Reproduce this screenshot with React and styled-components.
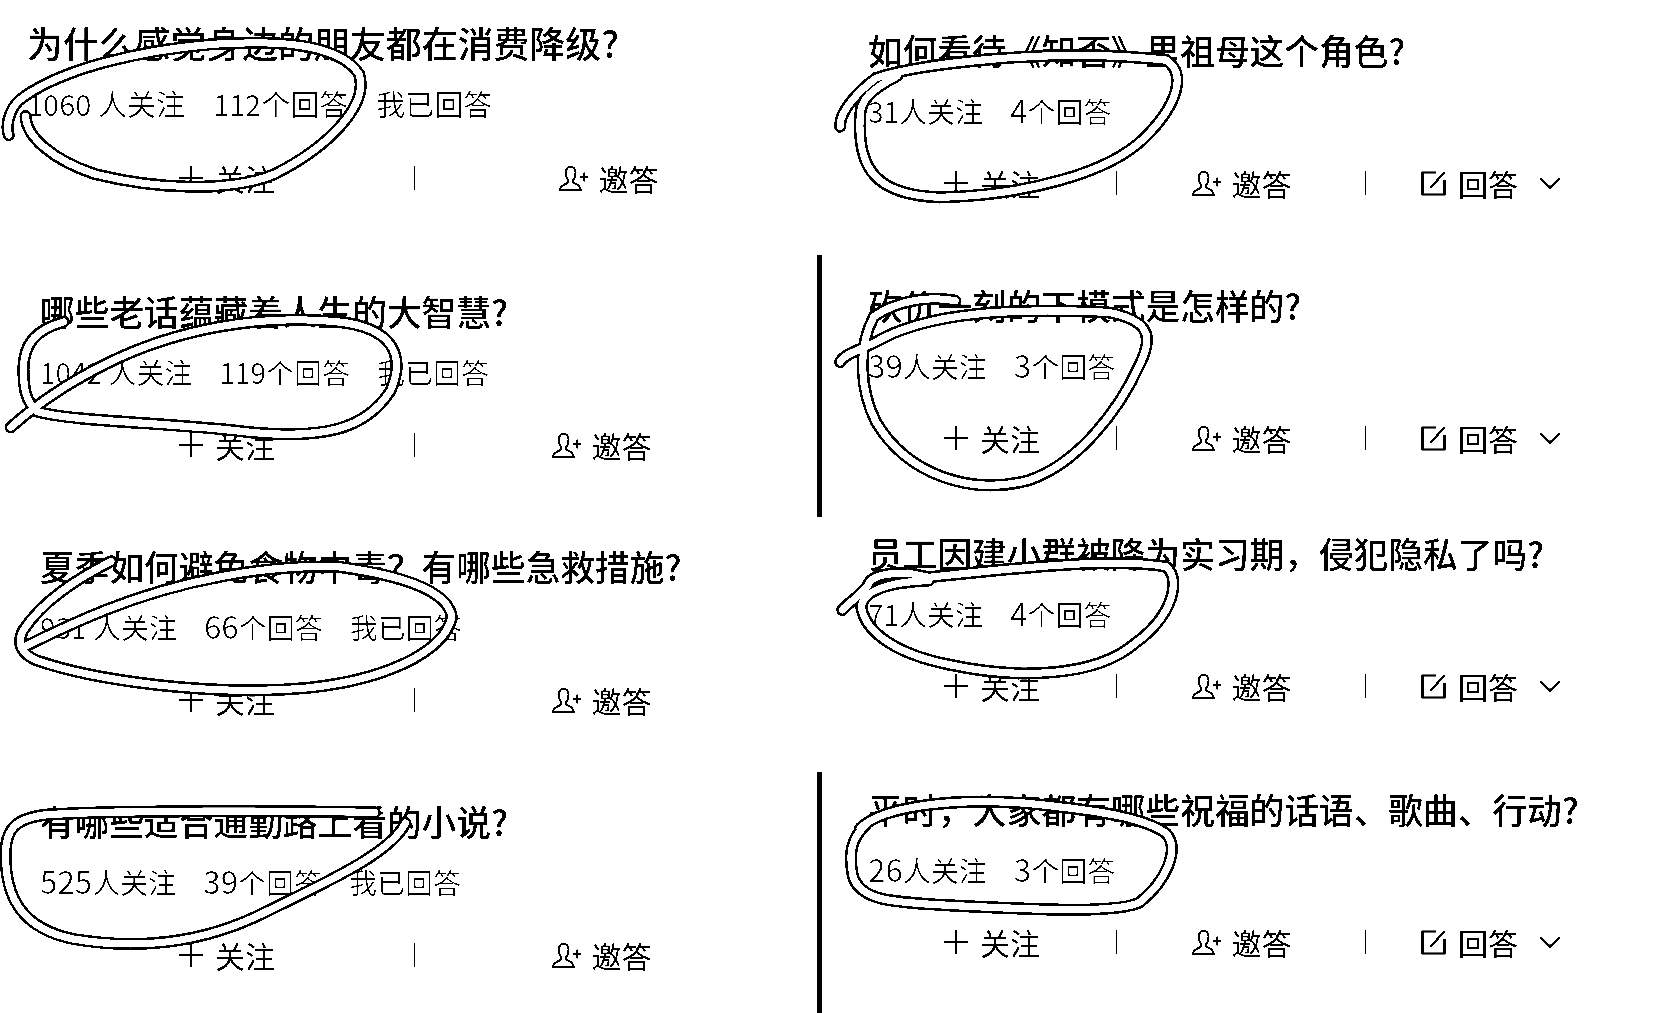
import React from "react";
import styled, { createGlobalStyle } from "styled-components";

const Global = createGlobalStyle`
  html, body { margin: 0; padding: 0; background: #fff; }
  #root { width: 1655px; height: 1013px; overflow: hidden; }
`;

const Page = styled.div`
  position: relative;
  display: grid;
  grid-template-columns: 817px 838px;
  width: 1655px;
  height: 1013px;
  overflow: hidden;
  background: #fff;
  color: #000;
  font-family: "Noto Sans CJK SC", "Noto Sans", sans-serif;
  filter: grayscale(1) contrast(40);
`;

const Column = styled.div`
  display: flex;
  flex-direction: column;
  min-width: 0;
`;

const Item = styled.section`
  box-sizing: border-box;
  height: ${(p) => p.$height}px;
  padding: ${(p) => p.$top}px 0 0 ${(p) => p.$left}px;
  border-left: ${(p) => (p.$bar ? "5px solid #000" : "0 none")};
`;

const Head = styled.div`
  margin-left: ${(p) => p.$shift || 0}px;
`;

const Title = styled.h2`
  margin: 0;
  font-size: ${(p) => p.$size}px;
  line-height: 44px;
  font-weight: 500;
  white-space: nowrap;
`;

const Meta = styled.div`
  display: flex;
  gap: ${(p) => p.$gap}px;
  margin-top: 19px;
  font-size: ${(p) => p.$size}px;
  line-height: 40px;
  font-weight: 400;
  color: #6a6a6a;
  white-space: pre;
`;

const Num = styled.span`
  font-size: ${(p) => (p.$wide ? "1.12em" : "1em")};
  line-height: 1;
`;

const Actions = styled.div`
  display: flex;
  align-items: center;
  height: 40px;
  margin-top: ${(p) => p.$gap}px;
`;

const Cell = styled.div`
  display: flex;
  align-items: center;
  justify-content: center;
  flex: none;
  width: ${(p) => p.$w}px;
  font-size: 30px;
  line-height: 40px;
  font-weight: 400;
  white-space: nowrap;
`;

const Sep = styled.i`
  flex: none;
  display: block;
  width: 1px;
  height: 24px;
  background: #000;
`;

const Glyph = styled.svg`
  display: block;
  flex: none;
  margin-right: ${(p) => p.$after}px;
  margin-left: ${(p) => p.$before || 0}px;
  fill: none;
  stroke: #000;
  stroke-width: ${(p) => p.$sw || 2};
`;

const Ink = styled.svg`
  position: absolute;
  left: 0;
  top: 0;
  width: 1655px;
  height: 1013px;
  pointer-events: none;
  fill: none;
  stroke-linecap: round;
  stroke-linejoin: round;
`;

const Plus = () => (
  <Glyph $after={12} $sw={2.6} width="24" height="24" viewBox="0 0 24 24">
    <path d="M0 12H24M12 0V24" />
  </Glyph>
);
const Invite = () => (
  <Glyph $after={10} $sw={1.9} width="31" height="27" viewBox="0 0 30 26">
    <path d="M13 1.500c-3.500 0-5.500 2.500-5.500 6 0 3 1 5.500 2.500 7 .5 1.500-.5 2.500-2 3.500-2.500 1-5.500 2-6.500 6h20.500c-.6-4-3.500-5-5.500-6-1.500-1-2.500-2-2-3.500 1.500-1.500 2.500-4 2.500-7 0-3.500-2-6-5-6z" />
    <path d="M21 11.500H29.500M25.200 7.200V15.800" />
  </Glyph>
);
const Edit = () => (
  <Glyph $after={12} $sw={2.2} width="25" height="25" viewBox="0 0 25 25">
    <path d="M15 1.500H1.500V23.500H23.500V9" />
    <path d="M24 1L9 17" />
  </Glyph>
);
const Chevron = () => (
  <Glyph $before={21} $after={0} $sw={2.4} width="22" height="12" viewBox="0 0 22 12">
    <path d="M1 1L11 10.500L21 1" />
  </Glyph>
);

/* count and label are kept apart: the reference sets digits without a "1" larger */
const Count = ({ text }) => {
  const [, digits, rest] = text.match(/^(\d+)(.*)$/);
  return (
    <span>
      <Num $wide={!digits.includes("1")}>{digits}</Num>
      {rest}
    </span>
  );
};

const LEFT = [
  { title: "为什么感觉身边的朋友都在消费降级?", size: 35.9, follow: "1060 人关注", answers: "112个回答", metaSize: 29, gap: 28, height: 269, shift: -13, act: 35, inviteW: 386 },
  { title: "哪些老话蕴藏着人生的大智慧?", size: 34.7, follow: "1042 人关注", answers: "119个回答", metaSize: 28, gap: 27, height: 255, act: 33, inviteW: 372 },
  { title: "夏季如何避免食物中毒\uFF1F有哪些急救措施?", size: 34.7, follow: "931 人关注", answers: "66个回答", metaSize: 28, gap: 27, height: 255, act: 33, inviteW: 372 },
  { title: "有哪些适合通勤路上看的小说?", size: 34.7, follow: "525人关注", answers: "39个回答", metaSize: 28, gap: 27, height: 234, act: 33, inviteW: 372 },
];

const RIGHT = [
  { title: "如何看待《知否》里祖母这个角色?", follow: "31人关注", answers: "4个回答", height: 255, top: 28 },
  { title: "砍价一刻的下模式是怎样的?", follow: "39人关注", answers: "3个回答", height: 262, top: 28, bar: true },
  { title: "员工因建小群被降为实习期\uFF0C侵犯隐私了吗?", follow: "71人关注", answers: "4个回答", height: 255, top: 14 },
  { title: "平时\uFF0C大家都有哪些祝福的话语、歌曲、行动?", follow: "26人关注", answers: "3个回答", height: 241, top: 15, bar: true },
];

const LOOPS = [
  "M8 128 C4 115 12 98 22 92 C60 65 130 48 200 42 C260 38 320 40 340 70 C350 100 310 140 260 165 C220 182 150 180 90 165 C50 152 25 130 24 110",
  "M60 305 C35 312 22 325 22 350 C22 368 24 380 35 390 C70 400 160 400 240 410 C300 415 345 410 370 370 C385 335 370 310 320 305 C250 298 170 310 100 345 C70 360 40 378 10 405",
  "M105 532 C70 550 40 570 22 597 C15 610 20 620 35 626 C90 645 200 660 290 652 C360 645 420 620 428 585 C425 560 380 545 320 537 C250 535 170 550 100 578 C70 590 45 602 25 612",
  "M355 770 C260 768 120 768 45 772 C15 775 5 785 5 810 C5 850 20 880 70 890 C130 900 190 895 250 865 C300 840 370 810 384 780",
  "M796 120 C795 105 815 85 830 74 C870 60 1000 45 1105 57 C1125 70 1115 100 1085 130 C1050 165 970 185 890 187 C830 185 812 160 815 110 C815 95 825 85 850 72",
  "M796 343 C800 335 815 332 830 324 C880 295 960 292 1050 296 C1085 303 1095 315 1080 345 C1060 390 1020 440 975 455 C920 470 860 450 830 400 C815 370 812 330 828 300 C850 285 880 280 905 285",
  "M798 578 C805 570 815 565 822 555 C825 545 840 543 860 543 L880 547 C950 540 1050 528 1105 537 C1120 550 1110 585 1075 610 C1040 640 970 645 900 630 C850 620 820 600 816 575 C818 560 840 552 880 550",
  "M815 785 C835 765 900 755 980 762 C1040 768 1085 775 1105 790 C1118 805 1105 835 1080 855 C1060 866 980 862 900 858 C850 855 815 855 808 830 C804 810 806 795 820 782",
];

export default function App() {
  return (
    <Page>
      <Global />
      <Column>
        {LEFT.map((q) => (
          <Item key={q.title} $height={q.height} $top={20} $left={40}>
            <Head $shift={q.shift}>
              <Title $size={q.size}>{q.title}</Title>
              <Meta $size={q.metaSize} $gap={q.gap}>
                <Count text={q.follow} />
                <Count text={q.answers} />
                <span>我已回答</span>
              </Meta>
            </Head>
            <Actions $gap={q.act}>
              <Cell $w={374}><Plus />关注</Cell>
              <Sep />
              <Cell $w={q.inviteW}><Invite />邀答</Cell>
            </Actions>
          </Item>
        ))}
      </Column>
      <Column>
        {RIGHT.map((q) => (
          <Item key={q.title} $height={q.height} $top={q.top} $left={q.bar ? 46 : 51} $bar={q.bar}>
            <Title $size={34.7}>{q.title}</Title>
            <Meta $size={28} $gap={27}>
              <Count text={q.follow} />
              <Count text={q.answers} />
            </Meta>
            <Actions $gap={32}>
              <Cell $w={248}><Plus />关注</Cell>
              <Sep />
              <Cell $w={248}><Invite />邀答</Cell>
              <Sep />
              <Cell $w={250}><Edit />回答<Chevron /></Cell>
            </Actions>
          </Item>
        ))}
      </Column>
      <Ink viewBox="0 0 1568 960">
        {LOOPS.map((d) => (
          <g key={d}>
            <path d={d} stroke="#000" strokeWidth="11.5" />
            <path d={d} stroke="#fff" strokeWidth="6.8" />
          </g>
        ))}
      </Ink>
    </Page>
  );
}
